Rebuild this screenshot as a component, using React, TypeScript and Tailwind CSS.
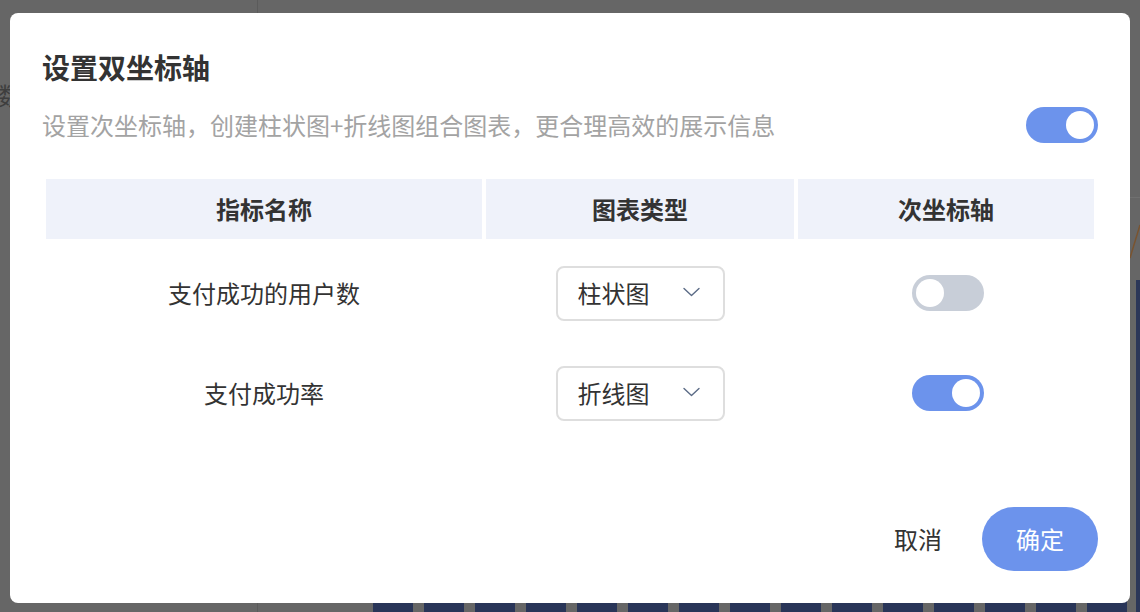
import React, { useState } from 'react';

type Row = { name: string; chart: string; secondary: boolean };

const Toggle: React.FC<{ on: boolean; onChange: () => void }> = ({ on, onChange }) => (
  <button
    onClick={onChange}
    className={`relative w-[72px] h-[36px] rounded-full shrink-0 ${on ? 'bg-[#6c93ec]' : 'bg-[#c8ced8]'}`}
  >
    <span
      className={`absolute top-[4px] w-[28px] h-[28px] rounded-full bg-white ${on ? 'left-[40px]' : 'left-[4px]'}`}
    />
  </button>
);

const Chevron = () => (
  <svg width="17" height="10" viewBox="0 0 17 10" fill="none">
    <path d="M1 1.5l7.5 7 7.5-7" stroke="#5b6b86" strokeWidth="1.4" strokeLinecap="round" strokeLinejoin="round" />
  </svg>
);

const App: React.FC = () => {
  const [enabled, setEnabled] = useState(true);
  const [rows, setRows] = useState<Row[]>([
    { name: '支付成功的用户数', chart: '柱状图', secondary: false },
    { name: '支付成功率', chart: '折线图', secondary: true },
  ]);

  const flip = (i: number) =>
    setRows(prev => prev.map((r, idx) => (idx === i ? { ...r, secondary: !r.secondary } : r)));

  return (
    <div className="relative w-[1140px] h-[612px] overflow-hidden bg-[#666666] font-['Noto_Sans_CJK_SC','Noto_Sans',sans-serif]">
      {/* dimmed page behind the dialog */}
      <div className="absolute left-[257px] top-0 w-px h-full bg-[#5b5b5b]" />
      <div className="absolute left-[-2px] top-[80px] text-[24px] leading-[30px] text-[#3e3e3e]">数</div>
      <div className="absolute left-[1130px] top-[197px] w-[10px] h-px bg-[#707070]" />
      <svg className="absolute left-[1128px] top-[222px]" width="12" height="38" viewBox="0 0 12 38">
        <path d="M2 36L12 3" stroke="#7a5430" strokeWidth="1.5" fill="none" />
      </svg>
      <div className="absolute left-[1136px] top-[280px] w-[4px] h-[332px] bg-[#2b3658]" />
      <div className="absolute left-[373px] top-[596px] flex gap-[11px]">
        {Array.from({ length: 15 }).map((_, i) => (
          <div key={i} className="w-[40px] h-[16px] bg-[#293558]" />
        ))}
      </div>

      {/* dialog */}
      <div className="absolute left-[10px] top-[13px] w-[1120px] h-[590px] bg-white rounded-[8px] px-[32px] pt-[32px] pb-[32px] flex flex-col">
        <h2 className="h-[44px] leading-[44px] text-[28px] font-bold text-[#333333]">设置双坐标轴</h2>

        <div className="mt-[18px] h-[36px] flex items-center justify-between">
          <p className="text-[24px] leading-[36px] text-[#a3a3a3]">
            设置次坐标轴，创建柱状图+折线图组合图表，更合理高效的展示信息
          </p>
          <Toggle on={enabled} onChange={() => setEnabled(!enabled)} />
        </div>

        <div className="mt-[36px] px-[4px] grid grid-cols-[436px_308px_296px] gap-x-[4px]">
          {['指标名称', '图表类型', '次坐标轴'].map(h => (
            <div
              key={h}
              className="h-[60px] bg-[#eff2fa] flex items-center justify-center text-[24px] font-bold text-[#333333]"
            >
              {h}
            </div>
          ))}
          <div className="col-span-3 h-[4px]" />
          {rows.map((r, i) => (
            <React.Fragment key={r.name}>
              <div className="h-[100px] flex items-center justify-center text-[24px] text-[#333333]">{r.name}</div>
              <div className="h-[100px] flex items-center justify-center">
                <div className="w-[169px] h-[55px] border-2 border-[#dedede] rounded-[8px] pl-[20px] pr-[23px] flex items-center justify-between">
                  <span className="text-[24px] text-[#333333]">{r.chart}</span>
                  <span className="-mt-[3px]">
                    <Chevron />
                  </span>
                </div>
              </div>
              <div className="h-[100px] flex items-center justify-center pl-[4px]">
                <Toggle on={r.secondary} onChange={() => flip(i)} />
              </div>
            </React.Fragment>
          ))}
        </div>

        <div className="mt-auto flex items-center justify-end gap-[40px]">
          <button className="text-[24px] text-[#333333]">取消</button>
          <button className="w-[116px] h-[64px] rounded-full bg-[#6c93ec] text-white text-[24px]">确定</button>
        </div>
      </div>
    </div>
  );
};

export default App;
